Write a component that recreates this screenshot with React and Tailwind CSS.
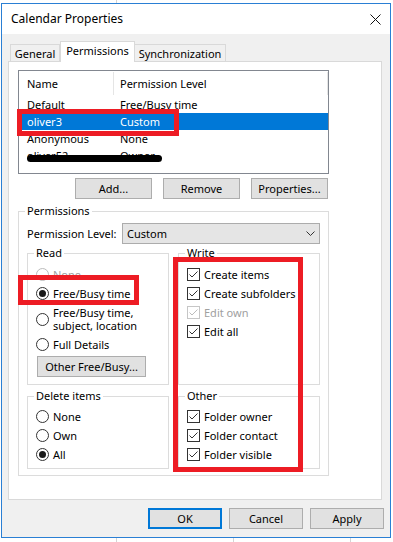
import React from 'react';

const Radio = ({ checked, disabled }) => (
  <span
    className={`flex h-[13px] w-[13px] shrink-0 items-center justify-center rounded-full border bg-white ${
      disabled ? 'border-[#bcbcbc]' : 'border-[#333333]'
    }`}
  >
    {checked && <span className="h-[7px] w-[7px] rounded-full bg-[#1a1a1a]" />}
  </span>
);

const Check = ({ disabled }) => (
  <span
    className={`flex h-[13px] w-[13px] shrink-0 items-center justify-center border bg-white ${
      disabled ? 'border-[#c6c6c6]' : 'border-[#333333]'
    }`}
  >
    <svg width="11" height="11" viewBox="0 0 11 11">
      <polyline
        points="1.5,5.5 4,8 9.5,2.5"
        fill="none"
        stroke={disabled ? '#bcbcbc' : '#333333'}
        strokeWidth="1"
      />
    </svg>
  </span>
);

const RadioRow = ({ label, checked, disabled, tall }) => (
  <div className={`flex items-center gap-[4px] ${tall ? 'h-[32px]' : 'h-[19px]'}`}>
    <Radio checked={checked} disabled={disabled} />
    <span className={`leading-[13px] ${disabled ? 'text-[#a0a0a0]' : ''}`}>{label}</span>
  </div>
);

const CheckRow = ({ label, disabled }) => (
  <div className="flex h-[19px] items-center gap-[4px]">
    <Check disabled={disabled} />
    <span className={disabled ? 'text-[#a0a0a0]' : ''}>{label}</span>
  </div>
);

const Button = ({ children, className = '' }) => (
  <button
    type="button"
    className={`flex h-[21px] items-center justify-center border border-[#adadad] bg-[#e1e1e1] text-black ${className}`}
  >
    {children}
  </button>
);

const Group = ({ title, className = '', children }) => (
  <fieldset className={`border border-[#dcdcdc] px-[8px] ${className}`}>
    <legend className="ml-[-2px] h-[16px] px-[2px] leading-[16px]">{title}</legend>
    {children}
  </fieldset>
);

const rows = [
  { name: 'Default', level: 'Free/Busy time' },
  { name: 'oliver3', level: 'Custom', selected: true },
  { name: 'Anonymous', level: 'None' },
  { name: 'oliver52', level: 'Owner', hidden: true },
];

export default function App() {
  return (
    <div className="relative h-[542px] w-[393px] overflow-hidden bg-white pl-[1px] pt-[3px] font-['Segoe_UI','Noto_Sans',sans-serif] text-[11px] leading-[16px] text-black">
      {/* background window lines */}
      <div className="absolute left-[116px] top-0 h-[3px] w-px bg-[#d4d4d4]" />
      <div className="absolute bottom-0 left-[116px] h-[4px] w-px bg-[#d4d4d4]" />
      <div className="absolute bottom-0 left-[233px] h-[4px] w-px bg-[#d4d4d4]" />
      <div className="absolute bottom-0 left-[350px] h-[4px] w-px bg-[#d4d4d4]" />

      <div className="flex h-[535px] w-[390px] flex-col border border-[#2a7fd4] bg-[#f0f0f0]">
        {/* title bar */}
        <div className="flex h-[30px] shrink-0 items-center justify-between bg-white pl-[9px] pr-[9px] text-[12px]">
          <span>Calendar Properties</span>
          <svg width="11" height="11" viewBox="0 0 11 11">
            <path d="M0.5 0.5 L10.5 10.5 M10.5 0.5 L0.5 10.5" stroke="#111" strokeWidth="1" />
          </svg>
        </div>

        {/* tabs */}
        <div className="mt-[7px] flex h-[21px] items-end pl-[8px]">
          <div className="flex h-[18px] w-[50px] items-center justify-center border border-b-0 border-[#d9d9d9] bg-[#f0f0f0]">
            General
          </div>
          <div className="relative z-10 flex h-[21px] w-[75px] items-start justify-center border border-b-0 border-[#d9d9d9] bg-white pt-[1px]">
            Permissions
          </div>
          <div className="flex h-[18px] w-[91px] items-center justify-center border border-b-0 border-l-0 border-[#d9d9d9] bg-[#f0f0f0]">
            Synchronization
          </div>
        </div>

        {/* tab panel */}
        <div className="-mt-px ml-[6px] h-[439px] w-[374px] border border-[#d9d9d9] bg-white pl-[9px] pt-[8px]">
          {/* permission list */}
          <div className="h-[104px] w-[311px] border border-[#828790] bg-white">
            <div className="flex h-[25px] items-center">
              <div className="flex h-[23px] w-[95px] items-center border-r border-[#e5e5e5] pl-[8px]">Name</div>
              <div className="flex h-[23px] flex-1 items-center border-r border-[#e5e5e5] pl-[6px]">Permission Level</div>
            </div>
            {rows.map((r) => (
              <div
                key={r.name}
                className={`relative flex h-[17px] items-center ${r.selected ? 'bg-[#0078d7] text-white' : ''}`}
              >
                <div className="w-[101px] pl-[8px]">{r.name}</div>
                <div className="flex-1">{r.level}</div>
                {r.hidden && (
                  <div className="absolute left-[8px] top-[8px] h-[7px] w-[135px] rounded-full bg-black" />
                )}
              </div>
            ))}
          </div>

          {/* list buttons */}
          <div className="ml-[57px] mt-[4px] flex gap-[11px]">
            <Button className="w-[77px]">Add...</Button>
            <Button className="w-[77px]">Remove</Button>
            <Button className="w-[77px]">Properties...</Button>
          </div>

          {/* permissions group */}
          <Group title="Permissions" className="mt-[4px] w-[311px] pb-[6px]">
            <div className="flex items-center pt-[4px]">
              <span className="w-[95px] whitespace-nowrap">Permission Level:</span>
              <div className="flex h-[21px] flex-1 items-center justify-between border border-[#acacac] bg-[#e5e5e5] pl-[4px] pr-[4px]">
                <span>Custom</span>
                <svg width="9" height="5" viewBox="0 0 9 5">
                  <polyline points="0.5,0.5 4.5,4.5 8.5,0.5" fill="none" stroke="#333" strokeWidth="1" />
                </svg>
              </div>
            </div>

            <div className="mt-[1px] flex gap-[9px]">
              <Group title="Read" className="w-[142px] pb-[7px]">
                <div className="pt-[4px]">
                  <RadioRow label="None" disabled />
                  <RadioRow label="Free/Busy time" checked />
                  <RadioRow
                    tall
                    label={
                      <>
                        Free/Busy time,
                        <br />
                        subject, location
                      </>
                    }
                  />
                  <RadioRow label="Full Details" />
                  <Button className="ml-[1px] mt-[2px] w-[109px]">Other Free/Busy...</Button>
                </div>
              </Group>
              <Group title="Write" className="w-[142px] pb-[7px]">
                <div className="pt-[4px]">
                  <CheckRow label="Create items" />
                  <CheckRow label="Create subfolders" />
                  <CheckRow label="Edit own" disabled />
                  <CheckRow label="Edit all" />
                </div>
              </Group>
            </div>

            <div className="mt-[3px] flex gap-[9px]">
              <Group title="Delete items" className="w-[142px] pb-[4px]">
                <div className="pt-[3px]">
                  <RadioRow label="None" />
                  <RadioRow label="Own" />
                  <RadioRow label="All" checked />
                </div>
              </Group>
              <Group title="Other" className="w-[142px] pb-[4px]">
                <div className="pt-[3px]">
                  <CheckRow label="Folder owner" />
                  <CheckRow label="Folder contact" />
                  <CheckRow label="Folder visible" />
                </div>
              </Group>
            </div>
          </Group>
        </div>

        {/* dialog buttons */}
        <div className="mt-[8px] flex justify-end gap-[7px] pr-[6px]">
          <button
            type="button"
            className="flex h-[21px] w-[74px] items-center justify-center border-2 border-[#0078d7] bg-[#e1e1e1]"
          >
            OK
          </button>
          <Button className="w-[74px]">Cancel</Button>
          <Button className="w-[74px]">Apply</Button>
        </div>
      </div>

      {/* annotation boxes */}
      <div className="absolute left-[17px] top-[109px] h-[27px] w-[162px] border-[5px] border-[#ed1c24]" />
      <div className="absolute left-[18px] top-[275px] h-[30px] w-[121px] border-[5px] border-[#ed1c24]" />
      <div className="absolute left-[173px] top-[257px] h-[215px] w-[130px] border-[5px] border-[#ed1c24]" />
    </div>
  );
}
